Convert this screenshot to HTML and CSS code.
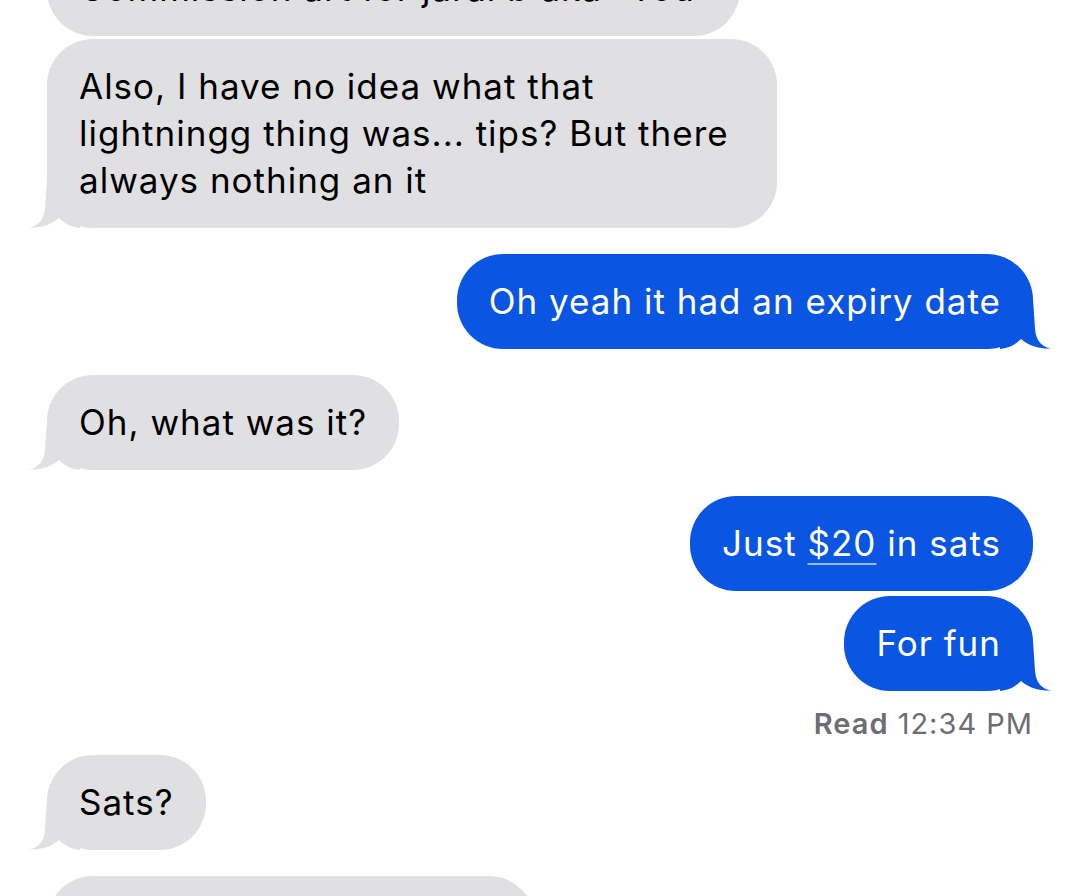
FILE: index.html
```html
<!DOCTYPE html>
<html lang="en">
<head>
<meta charset="utf-8">
<title>Messages</title>
<link rel="stylesheet" href="styles.css">
</head>
<body>
<main class="thread">
  <div class="bubble recv first w-top">Commission art for jarai b aka “You”</div>

  <div class="bubble recv same tail">Also, I have no idea what that lightningg thing was... tips? But there always nothing an it
    <svg class="tail-svg tail-left" viewBox="0 0 52 50" aria-hidden="true"><path d="M33,0 L35,30 C36,42 42,48 51,49.5 C42,50 30,48 21,40 C16,45 10,49 0,50 L0,0 Z"/></svg>
  </div>

  <div class="bubble sent group tail">Oh yeah it had an expiry date
    <svg class="tail-svg tail-right" viewBox="0 0 52 50" aria-hidden="true"><path d="M33,0 L35,30 C36,42 42,48 51,49.5 C42,50 30,48 21,40 C16,45 10,49 0,50 L0,0 Z"/></svg>
  </div>

  <div class="bubble recv group tail">Oh, what was it?
    <svg class="tail-svg tail-left" viewBox="0 0 52 50" aria-hidden="true"><path d="M33,0 L35,30 C36,42 42,48 51,49.5 C42,50 30,48 21,40 C16,45 10,49 0,50 L0,0 Z"/></svg>
  </div>

  <div class="bubble sent group">Just <span class="link">$20</span> in sats</div>

  <div class="bubble sent same tail">For fun
    <svg class="tail-svg tail-right" viewBox="0 0 52 50" aria-hidden="true"><path d="M33,0 L35,30 C36,42 42,48 51,49.5 C42,50 30,48 21,40 C16,45 10,49 0,50 L0,0 Z"/></svg>
  </div>

  <div class="receipt"><strong>Read</strong> 12:34 PM</div>

  <div class="bubble recv after-receipt tail">Sats?
    <svg class="tail-svg tail-left" viewBox="0 0 52 50" aria-hidden="true"><path d="M33,0 L35,30 C36,42 42,48 51,49.5 C42,50 30,48 21,40 C16,45 10,49 0,50 L0,0 Z"/></svg>
  </div>

  <div class="bubble recv group w-bottom">&nbsp;</div>
</main>
</body>
</html>
```

FILE: styles.css
```css
html, body {
  margin: 0;
  padding: 0;
  background: #ffffff;
  width: 1080px;
  height: 896px;
  overflow: hidden;
}

.thread {
  display: flex;
  flex-direction: column;
  padding: 0 47px;
  font-family: Inter, "Liberation Sans", sans-serif;
  font-size: 35px;
  letter-spacing: 1px;
}

.bubble {
  position: relative;
  box-sizing: border-box;
  max-width: 730px;
  padding: 24px 32px;
  line-height: 47px;
  border-radius: 46px;
}

.recv {
  align-self: flex-start;
  background: #e0e0e3;
  color: #000000;
}

.sent {
  align-self: flex-end;
  background: #0a55e2;
  color: #ffffff;
}

.first { margin-top: -59px; }
.same { margin-top: 3px; }
.sent.same { margin-top: 5px; }
.group { margin-top: 26px; }
.after-receipt { margin-top: 14px; }

.w-top {
  width: 693px;
  white-space: nowrap;
  overflow: hidden;
}
.w-bottom { width: 488px; height: 95px; }

.tail-svg {
  position: absolute;
  bottom: 0;
  width: 52px;
  height: 50px;
}

.tail-right {
  right: -19px;
  fill: #0a55e2;
}

.tail-left {
  left: -19px;
  fill: #e0e0e3;
  transform: scaleX(-1);
}

.link {
  text-decoration: underline;
  text-decoration-color: #9cbaf7;
  text-decoration-thickness: 2px;
  text-underline-offset: 7px;
}

.receipt {
  align-self: flex-end;
  margin-top: 16px;
  font-size: 29px;
  line-height: 34px;
  color: #6d6d72;
  letter-spacing: 1px;
}

.receipt strong {
  font-weight: 600;
}
```
